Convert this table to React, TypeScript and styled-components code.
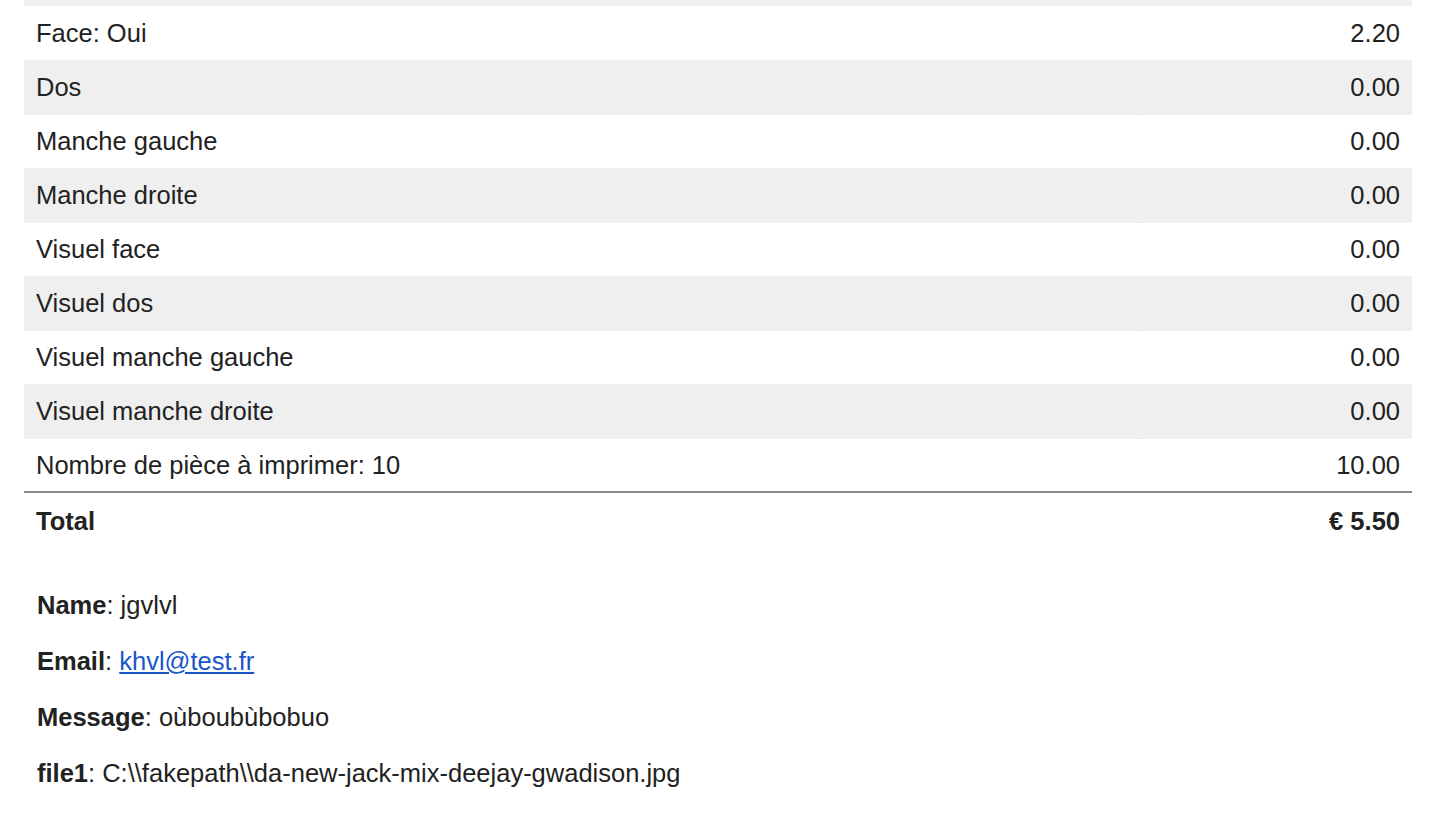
import React from "react";
import styled, { createGlobalStyle } from "styled-components";

const GlobalStyle = createGlobalStyle`
  html, body {
    margin: 0;
    padding: 0;
    background: #fff;
  }
  body {
    font-family: "Liberation Sans", Arial, sans-serif;
    color: #222;
  }
`;

const Page = styled.div`
  padding: 0 30px 0 24px;
`;

const Table = styled.table`
  width: 100%;
  border-collapse: collapse;
  font-size: 25.5px;
`;

const Row = styled.tr<{ $shaded?: boolean }>`
  background: ${(p) => (p.$shaded ? "#efefef" : "#fff")};
  height: 54px;
  td {
    border-bottom: 1px dotted ${(p) => (p.$shaded ? "#e2e2e2" : "#f4f4f4")};
  }
`;

const TopStrip = styled.tr`
  height: 6px;
  background: #efefef;
`;

const Cell = styled.td<{ $right?: boolean }>`
  padding: 0 12px;
  line-height: 30px;
  text-align: ${(p) => (p.$right ? "right" : "left")};
  vertical-align: middle;
`;

const TotalRow = styled.tr`
  height: 56px;
  border-top: 2px solid #8a8a8a;
  font-weight: bold;
`;

const Info = styled.div`
  padding: 42px 0 0 13px;
  font-size: 25.5px;
`;

const InfoLine = styled.p`
  margin: 0;
  height: 56px;
  line-height: 30px;
`;

const Link = styled.a`
  color: #1a55cc;
  text-decoration: underline;
`;

const items: [string, string][] = [
  ["Face: Oui", "2.20"],
  ["Dos", "0.00"],
  ["Manche gauche", "0.00"],
  ["Manche droite", "0.00"],
  ["Visuel face", "0.00"],
  ["Visuel dos", "0.00"],
  ["Visuel manche gauche", "0.00"],
  ["Visuel manche droite", "0.00"],
  ["Nombre de pièce à imprimer: 10", "10.00"],
];

const App = () => {
  return (
    <Page>
      <GlobalStyle />
      <Table>
        <tbody>
          <TopStrip>
            <td colSpan={2} />
          </TopStrip>
          {items.map(([label, value], i) => (
            <Row key={label} $shaded={i % 2 === 1}>
              <Cell>{label}</Cell>
              <Cell $right>{value}</Cell>
            </Row>
          ))}
          <TotalRow>
            <Cell>Total</Cell>
            <Cell $right>€ 5.50</Cell>
          </TotalRow>
        </tbody>
      </Table>
      <Info>
        <InfoLine>
          <b>Name</b>: jgvlvl
        </InfoLine>
        <InfoLine>
          <b>Email</b>: <Link href="#">khvl@test.fr</Link>
        </InfoLine>
        <InfoLine>
          <b>Message</b>: oùboubùbobuo
        </InfoLine>
        <InfoLine>
          <b>file1</b>: C:\\fakepath\\da-new-jack-mix-deejay-gwadison.jpg
        </InfoLine>
      </Info>
    </Page>
  );
};

export default App;
